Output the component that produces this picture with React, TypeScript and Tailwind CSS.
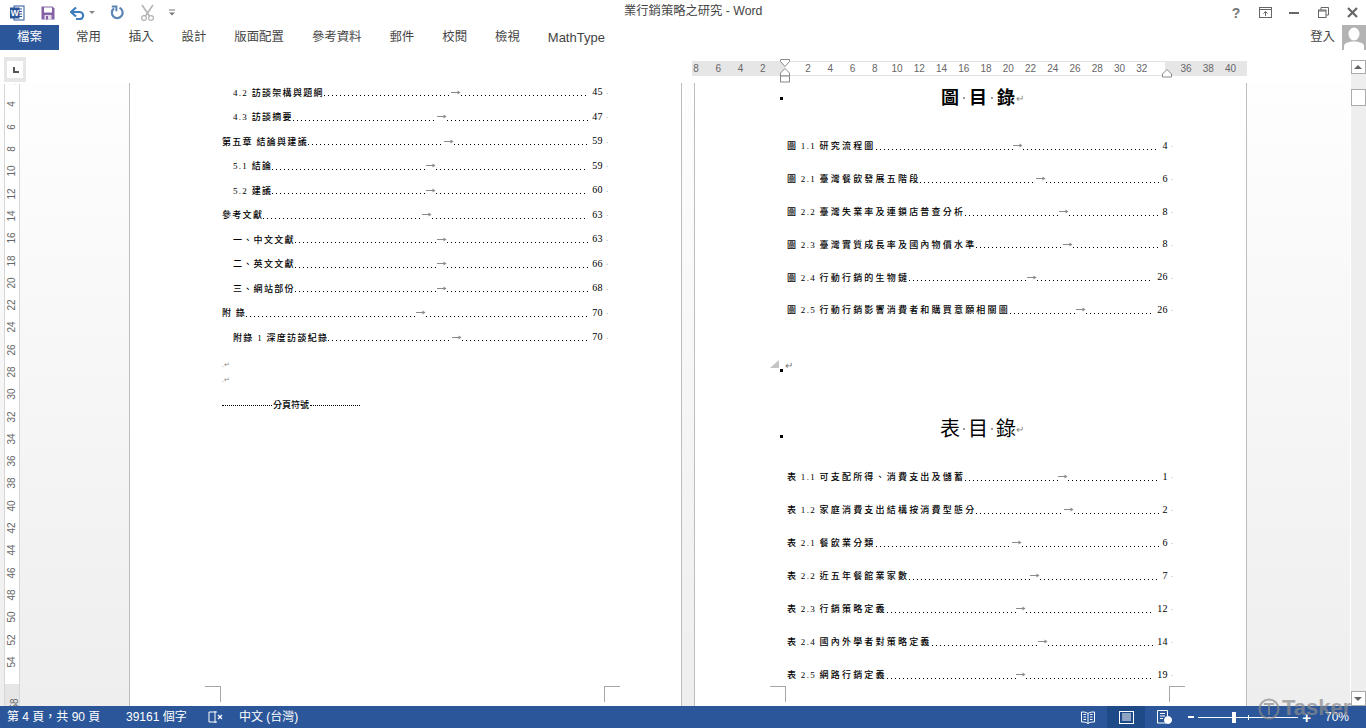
import React from 'react';

const SANS = "font-['Liberation_Sans','Noto_Sans_CJK_TC',sans-serif]";
const DOC = "font-['Liberation_Serif','Noto_Sans_CJK_TC',serif]";

interface TocEntry {
  text: string;
  page: string;
  arrow: number;
  indent?: boolean;
}

const leftEntries: TocEntry[] = [
  { text: '4.2 訪談架構與題綱', page: '45', arrow: 456, indent: true },
  { text: '4.3 訪談摘要', page: '47', arrow: 442, indent: true },
  { text: '第五章 結論與建議', page: '59', arrow: 449 },
  { text: '5.1 結論', page: '59', arrow: 431, indent: true },
  { text: '5.2 建議', page: '60', arrow: 431, indent: true },
  { text: '參考文獻', page: '63', arrow: 427 },
  { text: '一、中文文獻', page: '63', arrow: 442, indent: true },
  { text: '二、英文文獻', page: '66', arrow: 442, indent: true },
  { text: '三、網站部份', page: '68', arrow: 442, indent: true },
  { text: '附 錄', page: '70', arrow: 421 },
  { text: '附錄 1 深度訪談紀錄', page: '70', arrow: 457, indent: true },
];

const figureEntries: TocEntry[] = [
  { text: '圖 1.1 研究流程圖', page: '4', arrow: 1018 },
  { text: '圖 2.1 臺灣餐飲發展五階段', page: '6', arrow: 1041 },
  { text: '圖 2.2 臺灣失業率及連鎖店普查分析', page: '8', arrow: 1064 },
  { text: '圖 2.3 臺灣實質成長率及國內物價水準', page: '8', arrow: 1068 },
  { text: '圖 2.4 行動行銷的生物鏈', page: '26', arrow: 1032 },
  { text: '圖 2.5 行動行銷影響消費者和購買意願相關圖', page: '26', arrow: 1081 },
];

const tableEntries: TocEntry[] = [
  { text: '表 1.1 可支配所得、消費支出及儲蓄', page: '1', arrow: 1063 },
  { text: '表 1.2 家庭消費支出結構按消費型態分', page: '2', arrow: 1069 },
  { text: '表 2.1 餐飲業分類', page: '6', arrow: 1017 },
  { text: '表 2.2 近五年餐館業家數', page: '7', arrow: 1035 },
  { text: '表 2.3 行銷策略定義', page: '12', arrow: 1021 },
  { text: '表 2.4 國內外學者對策略定義', page: '14', arrow: 1043 },
  { text: '表 2.5 網路行銷定義', page: '19', arrow: 1021 },
];

const tabs = ['常用', '插入', '設計', '版面配置', '參考資料', '郵件', '校閱', '檢視', 'MathType'];
const verticalTicks = [2, 4, 6, 8, 10, 12, 14, 16, 18, 20, 22, 24, 26, 28, 30, 32, 34, 36, 38, 40, 42, 44, 46, 48, 50, 52, 54];
const rulerMiddle = [2, 4, 6, 8, 10, 12, 14, 16, 18, 20, 22, 24, 26, 28, 30, 32];

const Dots = () => (
  <span className="flex-1 min-w-0 h-[1px] mt-[7px] bg-[linear-gradient(to_right,#000_1px,transparent_1px)] bg-[length:4px_1px] bg-repeat-x" />
);

const TabArrow = () => (
  <svg className="shrink-0" width="10" height="5" viewBox="0 0 10 5">
    <path d="M0 2.5h8" stroke="#8a8a8a" strokeWidth="1" />
    <path d="M6.5 0.5L9.5 2.5L6.5 4.5Z" fill="#8a8a8a" />
  </svg>
);

const TocRow = ({ entry, rowLeft, rowClass, wide }: { entry: TocEntry; rowLeft: number; rowClass: string; wide?: boolean }) => {
  const start = entry.indent ? rowLeft + 11 : rowLeft;
  // figure and table captions: the number part keeps its width, only the words are spaced wider
  const parts = wide ? entry.text.match(/^(\S+ \S+ )(.*)$/) : null;
  return (
    <div className={`flex items-center ${rowClass} ${entry.indent ? 'pl-[11px]' : ''} ${DOC}`}>
      <div className="flex items-center shrink-0 overflow-hidden" style={{ width: entry.arrow - start - 5 }}>
        <span className="shrink-0 mt-[2px] whitespace-pre text-[9px] font-medium leading-none tracking-[1.3px] text-black">
          {parts ? parts[1] : entry.text}
          {parts && <span className="tracking-[2.2px]">{parts[2]}</span>}
        </span>
        <Dots />
      </div>
      <TabArrow />
      <Dots />
      <span className="shrink-0 pl-[4px] text-[10px] leading-none tracking-[0.4px] text-black">{entry.page}</span>
      <span className="shrink-0 w-[5px] text-right text-[7px] leading-none text-[#888]">.</span>
    </div>
  );
};

const CropMark = ({ className }: { className: string }) => <div className={`absolute w-[16px] h-[16px] border-[#a6a6a6] ${className}`} />;

const ListSquare = ({ className }: { className: string }) => <div className={`absolute left-[-7px] w-[3px] h-[3px] bg-black ${className}`} />;

const Dot = () => <span className="w-[2px] h-[2px] bg-[#9a9a9a] self-center" />;

const WordIcon = () => (
  <svg width="16" height="16" viewBox="0 0 16 16">
    <rect x="5" y="1" width="10" height="14" fill="#fff" stroke="#2b579a" />
    <path d="M9 4h4M9 6.5h4M9 9h4M9 11.5h4" stroke="#2b579a" />
    <rect x="1" y="2.5" width="9.5" height="11" fill="#2b579a" />
    <text x="5.7" y="11.2" textAnchor="middle" fontSize="8.5" fontWeight="700" fill="#fff" fontFamily="Liberation Sans">W</text>
  </svg>
);

const SaveIcon = () => (
  <svg width="16" height="16" viewBox="0 0 16 16">
    <path d="M1.5 1.5h11l2 2v11h-13z" fill="#8562a6" />
    <rect x="4" y="2.5" width="8" height="5" fill="#fff" />
    <rect x="4.5" y="10" width="7" height="4.5" fill="#e6deed" />
    <rect x="6" y="11" width="2" height="3.5" fill="#8562a6" />
  </svg>
);

const UndoIcon = () => (
  <svg width="15" height="14" viewBox="0 0 15 14" fill="none">
    <path d="M2.5 6h7a3.6 3.6 0 0 1 0 7.2H6" stroke="#3b7dbd" strokeWidth="2.2" />
    <path d="M6 1.5L1 6l5 4.5" stroke="#3b7dbd" strokeWidth="2.2" />
  </svg>
);

const RepeatIcon = () => (
  <svg width="15" height="15" viewBox="0 0 15 15" fill="none">
    <path d="M9.5 2.8a5.4 5.4 0 1 1-5.5.6" stroke="#5b85b5" strokeWidth="2.2" />
    <path d="M1.8 1.6h4.6v4.6" stroke="#5b85b5" strokeWidth="2" />
  </svg>
);

const ScissorsIcon = () => (
  <svg width="15" height="17" viewBox="0 0 15 17" fill="none" stroke="#b5b5b5">
    <path d="M2 1l7.5 11M13 1L5.5 12" strokeWidth="1.6" />
    <circle cx="4" cy="14" r="2.4" strokeWidth="1.2" />
    <circle cx="11" cy="14" r="2.4" strokeWidth="1.2" />
  </svg>
);

const TitleBar = () => (
  <div className={`relative flex items-center h-[25px] shrink-0 ${SANS}`}>
    <div className="flex items-center pl-[9px]">
      <WordIcon />
      <span className="ml-[15px]"><SaveIcon /></span>
      <span className="ml-[14px]"><UndoIcon /></span>
      <span className="ml-[4px] w-0 h-0 border-x-[3px] border-x-transparent border-t-[3px] border-t-[#888]" />
      <span className="ml-[15px]"><RepeatIcon /></span>
      <span className="ml-[15px]"><ScissorsIcon /></span>
      <svg className="ml-[14px]" width="6" height="7" viewBox="0 0 6 7">
        <path d="M0 1h6" stroke="#777" />
        <path d="M0 3.5h6L3 6.5z" fill="#777" />
      </svg>
    </div>
    <div className="flex-1" />
    <span className="absolute left-[624px] top-[4px] text-[12.3px] leading-[15px] text-[#444]">業行銷策略之研究 - Word</span>
    <div className="flex items-center pr-[8px]">
      <span className="w-[14px] text-center text-[14px] font-bold leading-none text-[#777]">?</span>
      <svg className="ml-[16px]" width="13" height="11" viewBox="0 0 13 11" fill="none" stroke="#666">
        <rect x="0.5" y="0.5" width="12" height="10" />
        <path d="M0 2.5h13" />
        <path d="M6.5 9V4.5M4.5 6.5l2-2 2 2" />
      </svg>
      <span className="ml-[17px] w-[10px] h-[2px] bg-[#666]" />
      <svg className="ml-[19px]" width="11" height="11" viewBox="0 0 11 11" fill="none" stroke="#666">
        <rect x="0.5" y="3" width="7.5" height="7.5" />
        <path d="M3 3V0.5h7.5V8H8" />
        <path d="M0.5 4h7.5" />
      </svg>
      <svg className="ml-[18px]" width="11" height="11" viewBox="0 0 11 11" stroke="#666" strokeWidth="2.2">
        <path d="M1 1l9 9M10 1l-9 9" />
      </svg>
    </div>
  </div>
);

const TabBar = () => (
  <div className={`flex items-center h-[25px] shrink-0 text-[12.4px] text-[#444] ${SANS}`}>
    <div className="flex items-center justify-center w-[59px] h-full bg-[#2b579a] text-white">檔案</div>
    <div className="flex items-center pl-[3px]">
      {tabs.map(tab => (
        <span key={tab} className={`px-[14px] ${tab === 'MathType' ? 'text-[13px]' : ''}`}>{tab}</span>
      ))}
    </div>
    <div className="flex-1" />
    <span className="mr-[7px]">登入</span>
    <div className="w-[24px] h-full bg-[#b3b3b3] overflow-hidden">
      <svg width="24" height="25" viewBox="0 0 24 25">
        <ellipse cx="12" cy="9" rx="5.5" ry="6.5" fill="#fff" />
        <path d="M2 25v-4c0-3 5-4.5 10-4.5s10 1.5 10 4.5v4z" fill="#fff" />
      </svg>
    </div>
  </div>
);

const RulerCell = ({ value }: { value: number }) => (
  <span className="w-[22.25px] shrink-0 text-center">{value}</span>
);

const HorizontalRuler = () => (
  <div className={`relative flex h-[15px] mt-[11px] ml-[666px] text-[10px] leading-[15px] text-[#666] ${SANS}`}>
    <div className="flex justify-end w-[93px] pr-[11px] bg-[#e6e6e6] overflow-hidden">
      {[8, 6, 4, 2].map(v => <RulerCell key={v} value={v} />)}
    </div>
    <div className="flex w-[380px] pl-[12px] bg-white border-y border-[#e0e0e0] leading-[13px]">
      {rulerMiddle.map(v => <RulerCell key={v} value={v} />)}
    </div>
    <div className="flex w-[82px] pl-[10px] bg-[#e6e6e6]">
      {[36, 38, 40].map(v => <RulerCell key={v} value={v} />)}
    </div>
    <svg className="absolute left-[88px] top-[-2px]" width="11" height="24" viewBox="0 0 11 24" fill="#fff" stroke="#8a8a8a">
      <path d="M0.5 0.5h9v2L5 7.5 0.5 2.5z" />
      <path d="M5 9.5l4.5 4.5v3h-9v-3z" />
      <rect x="0.5" y="17" width="9" height="6" />
    </svg>
    <svg className="absolute left-[470px] top-[8px]" width="11" height="9" viewBox="0 0 11 9" fill="#fff" stroke="#8a8a8a">
      <path d="M5 0.5l4.5 4.5v3h-9v-3z" />
    </svg>
  </div>
);

const VerticalRuler = () => (
  <div className={`flex flex-col shrink-0 w-[16px] ml-[4px] mt-[1px] h-[622px] border-x border-[#d6d6d6] text-[10px] leading-none text-[#666] ${SANS}`}>
    <div className="h-[600px] shrink-0 bg-white overflow-hidden">
      <div className="-mt-[13px]">
        {verticalTicks.map(v => (
          <div key={v} className="flex items-center justify-center h-[22.3px]">
            <span className="-rotate-90 block">{v}</span>
          </div>
        ))}
      </div>
    </div>
    <div className="flex-1 flex justify-center bg-[#e6e6e6] overflow-hidden pt-[18px]">
      <span className="-rotate-90 block">58</span>
    </div>
  </div>
);

const LeftPage = () => (
  <div className="relative ml-[109px] w-[553px] h-[623px] bg-white border-x border-[#bdbdbd] overflow-hidden pl-[92px]">
    <div className="w-[386px] -mt-[3px]">
      {leftEntries.map(entry => (
        <TocRow key={entry.text} entry={entry} rowLeft={222} rowClass="h-[24.5px]" />
      ))}
    </div>
    <div className={`mt-[8px] text-[7px] leading-[15px] text-[#888] ${DOC}`}>
      <div>.↵</div>
      <div>.↵</div>
    </div>
    <div className={`flex items-center w-[138px] mt-[13px] ${SANS}`}>
      <span className="flex-1 border-t border-dotted border-black" />
      <span className="px-[1px] text-[9px] font-medium leading-none text-black">分頁符號</span>
      <span className="flex-1 border-t border-dotted border-black" />
    </div>
    <CropMark className="left-[75px] top-[603px] border-t border-r" />
    <CropMark className="left-[474px] top-[603px] border-t border-l" />
  </div>
);

const RightPage = () => (
  <div className="relative ml-[12px] w-[553px] h-[623px] bg-white border-x border-[#bdbdbd] overflow-hidden pl-[92px]">
    <div className={`relative flex justify-center gap-[4px] w-[391px] h-[30px] items-center text-[18px] font-bold leading-none text-black ${SANS}`}>
      <ListSquare className="top-[14px]" />
      <span>圖</span><Dot /><span>目</span><Dot /><span>錄</span>
      <span className="-ml-[3px] mt-[2px] text-[10px] font-normal text-[#888]">↵</span>
    </div>
    <div className="w-[386px] mt-[16.6px]">
      {figureEntries.map(entry => (
        <TocRow key={entry.text} entry={entry} rowLeft={787} rowClass="h-[32.8px]" wide />
      ))}
    </div>
    <div className="relative mt-[32.6px] h-[12px] text-[10px] leading-[12px] text-[#777]">
      <svg className="absolute left-[-17px] top-[1px]" width="9" height="8" viewBox="0 0 9 8"><path d="M9 0v8H0z" fill="#c4c4c4" /></svg>
      <ListSquare className="top-[10px]" />
      <span className={`-ml-[2px] ${SANS}`}>↵</span>
    </div>
    <div className={`relative flex justify-center gap-[3px] w-[390px] h-[28px] mt-[44px] items-center text-[20px] leading-none text-black ${SANS}`}>
      <ListSquare className="top-[20px]" />
      <span>表</span><Dot /><span>目</span><Dot /><span>錄</span>
      <span className="-ml-[3px] mt-[2px] text-[10px] text-[#888]">↵</span>
    </div>
    <div className="w-[386px] mt-[17.5px]">
      {tableEntries.map(entry => (
        <TocRow key={entry.text} entry={entry} rowLeft={787} rowClass="h-[33px]" wide />
      ))}
    </div>
    <CropMark className="left-[75px] top-[603px] border-t border-r" />
    <CropMark className="left-[474px] top-[603px] border-t border-l" />
  </div>
);

const Triangle = ({ up }: { up?: boolean }) => (
  <span className={`w-0 h-0 border-x-[4px] border-x-transparent ${up ? 'border-b-[4px] border-b-[#666]' : 'border-t-[4px] border-t-[#666]'}`} />
);

const ScrollBar = () => (
  <div className="flex flex-col items-center shrink-0 w-[16px] pt-[10px] h-[656px]">
    <div className="flex items-center justify-center w-[15px] h-[14px] bg-white border border-[#ababab]"><Triangle up /></div>
    <div className="flex-1 w-[15px] bg-[#eeeeee]">
      <div className="mt-[15px] w-[15px] h-[17px] bg-white border border-[#ababab]" />
    </div>
    <div className="flex items-center justify-center w-[15px] h-[15px] bg-white border border-[#ababab]"><Triangle /></div>
  </div>
);

const StatusBar = () => (
  <div className={`relative flex items-center h-[22px] shrink-0 bg-[#2b579a] text-[12px] text-white ${SANS}`}>
    <span className="ml-[7px] w-[119px]">第 4 頁，共 90 頁</span>
    <span className="w-[82px]">39161 個字</span>
    <svg width="15" height="14" viewBox="0 0 15 14" fill="none" stroke="#fff">
      <path d="M7 2H1v10h6M7 1v12M7 2h2M7 12h2" />
      <path d="M10 5l4 4M14 5l-4 4" strokeWidth="1.3" />
    </svg>
    <span className="ml-[16px]">中文 (台灣)</span>
    <div className="flex-1" />
    <svg width="14" height="13" viewBox="0 0 14 13" fill="none" stroke="#fff">
      <path d="M7 2.5C5 1 3 1 0.5 1v10C3 11 5 11 7 12.5 9 11 11 11 13.5 11V1C11 1 9 1 7 2.5zM7 2.5v10M2.5 3.5h2.5M2.5 6h2.5M2.5 8.5h2.5M9 3.5h2.5M9 6h2.5M9 8.5h2.5" />
    </svg>
    <div className="flex items-center justify-center ml-[12px] w-[38px] h-[22px] bg-[#1e4a87]">
      <svg width="15" height="13" viewBox="0 0 15 13" fill="none" stroke="#fff">
        <rect x="0.5" y="0.5" width="14" height="12" />
        <path d="M3 3h9M3 5h9M3 7h9M3 9h9" />
      </svg>
    </div>
    <svg className="ml-[12px]" width="15" height="14" viewBox="0 0 15 14" fill="none" stroke="#fff">
      <path d="M9 13H0.5V0.5h10V6M3 3.5h5M3 6h5M3 8.5h3" />
      <circle cx="11" cy="10" r="3.5" fill="#fff" />
    </svg>
    <span className="ml-[16px] w-[6px] h-[2px] bg-white" />
    <div className="relative flex items-center ml-[4px] w-[100px] h-[12px]">
      <span className="w-full h-[1px] bg-white" />
      <span className="absolute left-[34px] w-[4px] h-[11px] bg-white" />
      <span className="absolute left-[50px] w-[1px] h-[5px] bg-white" />
    </div>
    <span className="ml-[4px] text-[15px] leading-none font-bold">+</span>
    <span className="ml-[14px] mr-[17px] text-[12px]">70%</span>
    <div className="absolute left-[1258px] top-[-10px] flex items-center gap-[2px] text-[22px] font-bold leading-none text-[#8c8c8c] opacity-70">
      <svg width="22" height="24" viewBox="0 0 22 24" fill="none" stroke="#8c8c8c" strokeWidth="2">
        <circle cx="11" cy="13" r="9.5" />
        <path d="M6 8h10M11 8v11" />
      </svg>
      <span>Tasker</span>
    </div>
  </div>
);

export default function App() {
  return (
    <div className="flex flex-col w-full h-screen overflow-hidden bg-white">
      <TitleBar />
      <TabBar />
      <div className="flex flex-1 min-h-0">
        <div className="flex flex-col flex-1 min-w-0">
          <div className="flex h-[33px] shrink-0 bg-white">
            <div className="flex items-center justify-center mt-[7px] ml-[4px] w-[22px] h-[25px] bg-[#e6e6e6]">
              <div className="relative w-[16px] h-[17px] bg-white">
                <span className="absolute left-[6px] top-[6px] w-[2px] h-[6px] bg-[#555]" />
                <span className="absolute left-[6px] top-[10px] w-[6px] h-[2px] bg-[#555]" />
              </div>
            </div>
            <HorizontalRuler />
          </div>
          <div className="flex flex-1 min-h-0 bg-linear-to-b from-[#fefefe] to-[#eeeeee]">
            <VerticalRuler />
            <LeftPage />
            <RightPage />
          </div>
        </div>
        <ScrollBar />
      </div>
      <StatusBar />
    </div>
  );
}
